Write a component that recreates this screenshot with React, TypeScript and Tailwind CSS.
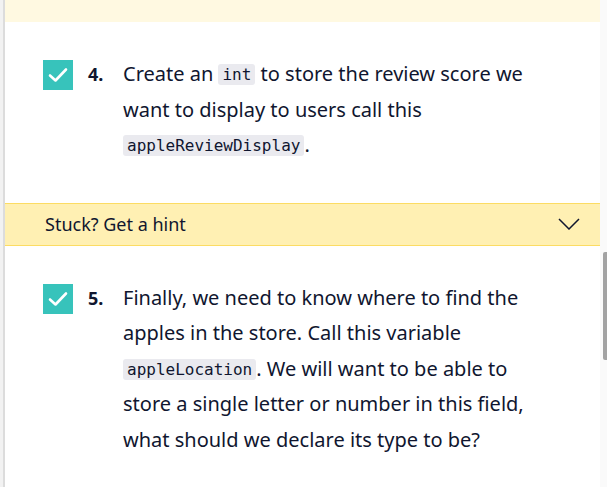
import React from 'react';

function Check() {
  return (
    <div className="w-[30px] h-[30px] bg-[#37c3bb] flex items-center justify-center shrink-0">
      <svg width="20" height="16" viewBox="0 0 20 16" fill="none">
        <path d="M2 8.5 L7.5 13.5 L18 2.5" stroke="white" strokeWidth="2.6" strokeLinecap="round" strokeLinejoin="round" />
      </svg>
    </div>
  );
}

function Code({ children }: { children: React.ReactNode }) {
  return (
    <code className="inline-block bg-[#eaeaef] rounded-[3px] px-[4px] h-[21px] leading-[21px] align-[1px] text-[16px] font-['DejaVu_Sans_Mono',monospace] text-[#10162f]">
      {children}
    </code>
  );
}

function Step({ n, children }: { n: number; children: React.ReactNode }) {
  return (
    <div className="flex items-start pl-[38px] pr-[40px]">
      <Check />
      <div className="w-[50px] pl-[15px] font-bold text-[18px] leading-[36px] -mt-[4px] shrink-0">{n}.</div>
      <p className="text-[20px] leading-[35.5px] -mt-[4px]">{children}</p>
    </div>
  );
}

export default function App() {
  return (
    <div className="h-[487px] w-[607px] bg-[#fafafa] flex overflow-hidden font-['Noto_Sans',sans-serif] text-[#10162f]">
      <div className="w-[3px] bg-[#f2f2f2] shrink-0" />
      <div className="w-[2px] bg-[#dcdcdc] shrink-0" />
      <div className="flex-1 bg-white flex flex-col">
        <div className="h-[22px] bg-[#fff9e1]" />
        <div className="pt-[38px] pb-[40px]">
          <Step n={4}>
            Create an <Code>int</Code> to store the review score we want to display to users call this{' '}
            <Code>appleReviewDisplay</Code>.
          </Step>
        </div>
        <div className="h-[43px] bg-[#fff0b3] border-y border-[#fcdc63] flex items-center justify-between pl-[40px] pr-[20px]">
          <span className="text-[18px]">Stuck? Get a hint</span>
          <svg width="22" height="12" viewBox="0 0 22 12" fill="none">
            <path d="M1 1 L11 11 L21 1" stroke="#10162f" strokeWidth="1.5" />
          </svg>
        </div>
        <div className="pt-[38px]">
          <Step n={5}>
            Finally, we need to know where to find the apples in the store. Call this variable{' '}
            <Code>appleLocation</Code>. We will want to be able to store a single letter or number in this field, what should we declare its type to be?
          </Step>
        </div>
      </div>
      <div className="w-[7px] shrink-0 flex flex-col">
        <div className="h-[252px]" />
        <div className="ml-[3px] w-[4px] h-[108px] bg-[#a3a3a3] rounded-l-[2px]" />
      </div>
    </div>
  );
}
